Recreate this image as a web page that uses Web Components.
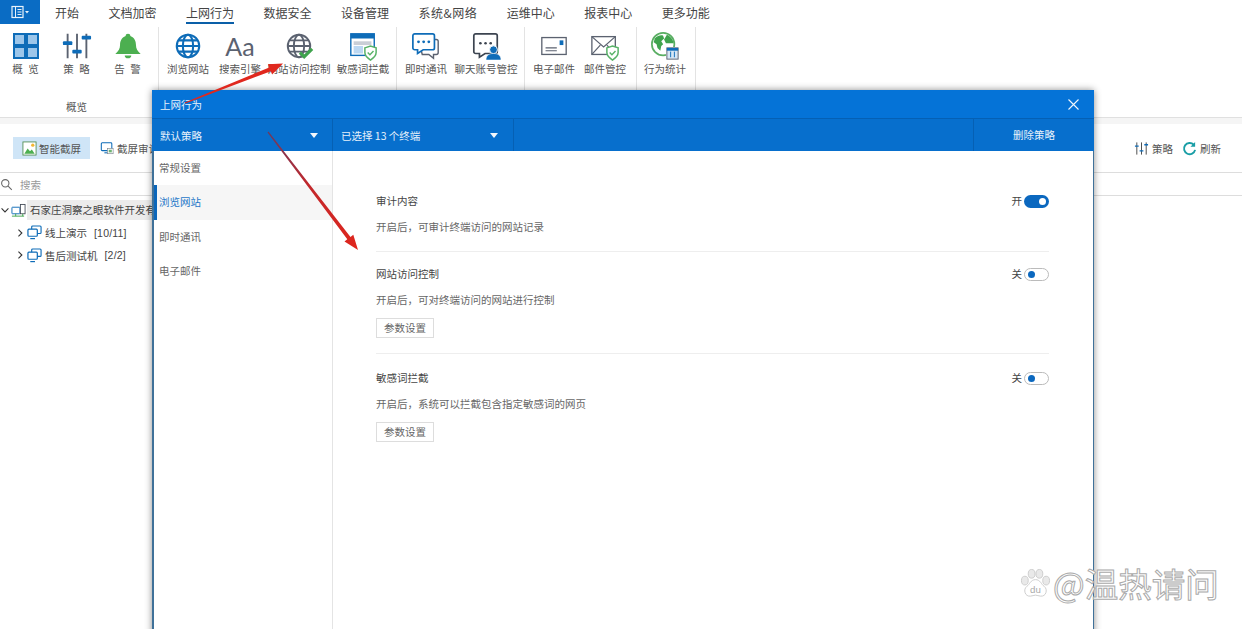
<!DOCTYPE html>
<html lang="zh"><head><meta charset="utf-8"><title>上网行为</title>
<style>
html,body{margin:0;height:629px;overflow:hidden;background:#fff;font-family:"Noto Sans CJK SC","Liberation Sans",sans-serif;color:#444}
</style></head><body>
<app-shell>
  <ribbon-tabs>
    <tab-item>开始</tab-item><tab-item>文档加密</tab-item><tab-item active>上网行为</tab-item><tab-item>数据安全</tab-item><tab-item>设备管理</tab-item><tab-item style="letter-spacing:.5px">系统&amp;网络</tab-item><tab-item>运维中心</tab-item><tab-item>报表中心</tab-item><tab-item>更多功能</tab-item>
  </ribbon-tabs>
  <ribbon-bar>
    <ribbon-group caption="概览" style="--pl:0px;--pr:5px">
      <ribbon-btn w="51" icon="grid">概 览</ribbon-btn><ribbon-btn w="51" icon="sliders">策 略</ribbon-btn><ribbon-btn w="51" icon="bell">告 警</ribbon-btn>
    </ribbon-group>
    <ribbon-group style="--pl:5px;--pr:0px">
      <ribbon-btn w="48" icon="globe">浏览网站</ribbon-btn><ribbon-btn w="56" icon="aa">搜索引擎</ribbon-btn><ribbon-btn w="62" icon="globecheck">网站访问控制</ribbon-btn><ribbon-btn w="66" icon="winshield">敏感词拦截</ribbon-btn>
    </ribbon-group>
    <ribbon-group style="--pl:3px;--pr:4px">
      <ribbon-btn w="52" icon="chat">即时通讯</ribbon-btn><ribbon-btn w="68" icon="chatuser">聊天账号管控</ribbon-btn>
    </ribbon-group>
    <ribbon-group style="--pl:3px;--pr:6px">
      <ribbon-btn w="52" icon="mail">电子邮件</ribbon-btn><ribbon-btn w="50" icon="mailshield">邮件管控</ribbon-btn>
    </ribbon-group>
    <ribbon-group style="--pl:0px;--pr:2px">
      <ribbon-btn w="56" icon="stats">行为统计</ribbon-btn>
    </ribbon-group>
  </ribbon-bar>
  <audit-toolbar></audit-toolbar>
  <search-row></search-row>
  <device-tree>
    <tree-row level="0" open>石家庄洞察之眼软件开发有</tree-row>
    <tree-row level="1" count="[10/11]">线上演示</tree-row>
    <tree-row level="1" count="[2/2]">售后测试机</tree-row>
  </device-tree>
  <policy-dialog>
    <policy-section heading="审计内容" desc="开启后，可审计终端访问的网站记录" on style="--pt:42px"></policy-section>
    <policy-section heading="网站访问控制" desc="开启后，可对终端访问的网站进行控制" action style="--pt:14px"></policy-section>
    <policy-section heading="敏感词拦截" desc="开启后，系统可以拦截包含指定敏感词的网页" action last style="--pt:16px"></policy-section>
  </policy-dialog>
  <red-arrows></red-arrows>
  <water-mark></water-mark>
</app-shell>
<script>
const B='#0e6cb8',G='#5b6270',GR='#4caf50',LB='#9cc6ea';
const shield=(x,y,s)=>`<g transform="translate(${x} ${y}) scale(${s})"><path d="M0 2 6 0l6 2v5c0 4-3 6-6 8-3-2-6-4-6-8z" fill="#fff" stroke="#58b368" stroke-width="1.6"/><path d="M3 7l2.4 2.4L9.2 5.4" fill="none" stroke="#58b368" stroke-width="1.5"/></g>`;
const globe=(c,w)=>`<circle cx="14" cy="14" r="12" fill="none" stroke="${c}" stroke-width="${w}"/><ellipse cx="14" cy="14" rx="5.5" ry="12" fill="none" stroke="${c}" stroke-width="${w}"/><path d="M2 14h24M3.8 8h20.4M3.8 20h20.4" fill="none" stroke="${c}" stroke-width="${w}"/>`;
const ICONS={
 grid:`<g fill="${LB}" stroke="${B}" stroke-width="2"><rect x="4" y="4" width="11" height="11"/><rect x="17" y="4" width="11" height="11"/><rect x="4" y="17" width="11" height="11"/><rect x="17" y="17" width="11" height="11"/></g>`,
 sliders:`<g stroke="${G}" stroke-width="2"><path d="M6 3v26M16 3v26M26 3v26"/></g><g fill="${B}"><rect x="1" y="11" width="10" height="4" rx="1"/><rect x="11" y="20" width="10" height="4" rx="1"/><rect x="21" y="5" width="10" height="4" rx="1"/></g>`,
 bell:`<path d="M16 3c1.600 0 2.500 1 2.500 2.300C23 6.800 24.500 11 24.500 15c0 4 1.500 6.500 5 9.500H2.500c3.500-3 5-5.500 5-9.500 0-4 1.500-8.200 6-9.700C13.500 4 14.400 3 16 3z" fill="${GR}"/><path d="M12.500 26a3.500 3 0 0 0 7 0z" fill="${GR}"/>`,
 globe:`<g transform="translate(2 2)">${globe(B,2.200)}</g>`,
 globecheck:`<g transform="translate(2 2)">${globe(G,2)}</g><path d="M17 23l4.500 4.500L30 19" fill="none" stroke="#3fa34d" stroke-width="3.400"/>`,
 winshield:`<rect x="3" y="3" width="25" height="23" fill="#fff" stroke="${B}" stroke-width="1.500"/><rect x="3" y="3" width="25" height="5" fill="${B}"/><rect x="6" y="11" width="19" height="4" fill="#c9ced6"/><rect x="6" y="16" width="10" height="8" fill="#bcd8f2"/><path d="M18 18h7M18 21h4" stroke="#c9ced6" stroke-width="1.500"/>${shield(18,16,1)}`,
 chat:`<path d="M8 9h19a2 2 0 0 1 2 2v12a2 2 0 0 1-2 2h-3v4l-5-4h-7z" fill="#fff" stroke="${G}" stroke-width="1.500"/><path d="M4 3h19a2 2 0 0 1 2 2v13a2 2 0 0 1-2 2H13l-6 4v-4H4a2 2 0 0 1-2-2V5a2 2 0 0 1 2-2z" fill="#fff" stroke="${B}" stroke-width="1.800"/><g fill="${B}"><circle cx="8" cy="11.500" r="1.500"/><circle cx="13.500" cy="11.500" r="1.500"/><circle cx="19" cy="11.500" r="1.500"/></g>`,
 chatuser:`<path d="M5 3h21a2 2 0 0 1 2 2v17a2 2 0 0 1-2 2H15l-6 4v-4H5a2 2 0 0 1-2-2V5a2 2 0 0 1 2-2z" fill="#fff" stroke="#3c4450" stroke-width="1.800"/><g fill="#3c4450"><circle cx="10" cy="13" r="1.400"/><circle cx="15.500" cy="13" r="1.400"/><circle cx="21" cy="13" r="1.400"/></g><circle cx="24" cy="20" r="4.200" fill="${B}" stroke="#fff"/><path d="M16 31c0-5 3-7 8-7s8 2 8 7z" fill="${B}" stroke="#fff" stroke-width=".6"/>`,
 mail:`<rect x="3" y="7" width="26" height="18" fill="#fff" stroke="${G}" stroke-width="1.400"/><rect x="22" y="10" width="4" height="5" fill="${B}"/><path d="M7 18h12M7 21h12" stroke="${G}" stroke-width="1.100"/>`,
 mailshield:`<rect x="2" y="6" width="25" height="19" fill="#fff" stroke="${G}" stroke-width="1.400"/><path d="M2 6l12.500 11L27 6M2 25l9-10M27 25l-9-10" fill="none" stroke="${G}" stroke-width="1.300"/>${shield(18,16,1)}`,
 stats:`<circle cx="14" cy="14" r="12" fill="#fff" stroke="#5aae63" stroke-width="1.800"/><path d="M5 8c3-3 7-4 9-3l1 3-3 3 2 3-2 2-1 5-3-3-1-4-3-2z" fill="#3fa34d"/><path d="M18 4c3 1 7 5 7 9h-8l-2-4z" fill="#3fa34d"/><rect x="17" y="17" width="14" height="14" fill="#fff"/><rect x="18" y="18" width="12" height="12" fill="#d6e6f5" stroke="${G}"/><rect x="18" y="18" width="12" height="3" fill="${B}"/><path d="M22 22v6M26 22v6" stroke="${B}"/>`,
 photo:`<rect x="2" y="2" width="28" height="28" fill="#fff" stroke="#4a8a4c" stroke-width="1.800"/><path d="M5 27l7-11 5 6 4-4 6 9z" fill="#4caf50"/><circle cx="23" cy="9" r="3.500" fill="#f2b632"/>`,
 screen:`<rect x="3" y="4" width="24" height="18" rx="2" fill="#fff" stroke="${B}" stroke-width="2.400"/><path d="M10 27h8" stroke="${B}" stroke-width="2.400"/><rect x="17" y="17" width="13" height="12" fill="#fff" stroke="#7d8791" stroke-width="1.500"/><rect x="20" y="20" width="7" height="6" fill="#6fb574"/>`,
 sliderthin:`<path d="M6 3v26M16 3v26M26 3v26" stroke="#444" stroke-width="2"/><path d="M2 11h8M12 21h8M22 8h8" stroke="${B}" stroke-width="3"/>`,
 refresh:`<path d="M25 8A12 12 0 1 0 28 19" fill="none" stroke="#1a9ea6" stroke-width="4"/><path d="M28 2v10H18z" fill="#1a9ea6"/>`,
 search:`<circle cx="13" cy="13" r="9" fill="none" stroke="#666" stroke-width="2.600"/><path d="M20 20l9 9" stroke="#666" stroke-width="2.600"/>`,
 net:`<rect x="2" y="9" width="17" height="14" rx="1" fill="#fff" stroke="${B}" stroke-width="2"/><rect x="20" y="3" width="10" height="20" fill="#fff" stroke="#3c4450" stroke-width="1.800"/><path d="M2 28h26M10 23v5M25 23v5" stroke="#3fa34d" stroke-width="2"/>`,
 monitor:`<rect x="10" y="2" width="20" height="16" rx="2" fill="#fff" stroke="${B}" stroke-width="2.400"/><rect x="2" y="9" width="20" height="15" rx="2" fill="#fff" stroke="${B}" stroke-width="2.600"/><path d="M7 29h10" stroke="${B}" stroke-width="2.600"/>`,
 chevdown:`<path d="M5 11l11 11 11-11" fill="none" stroke="#333" stroke-width="3.500"/>`,
 chevright:`<path d="M11 5l11 11-11 11" fill="none" stroke="#333" stroke-width="3.500"/>`
};
class Base extends HTMLElement{
  connectedCallback(){ if(this.shadowRoot) return; this.attachShadow({mode:'open'}).innerHTML=this.render(); }
  render(){return ''}
}
const def=(n,f)=>customElements.define(n,class extends Base{render(){return f(this)}});
def('x-icon',e=>{const s=e.getAttribute('size')||26,n=e.getAttribute('name');
  return `<style>:host{display:inline-flex;flex:none;width:${s}px;height:${s}px}svg{display:block;width:100%;height:100%}</style><svg viewBox="0 0 32 32">${ICONS[n]||''}</svg>`});
def('app-shell',()=>`<style>:host{display:flex;flex-direction:column;position:relative;width:1242px;height:629px;overflow:hidden}</style><slot></slot>`);
def('ribbon-tabs',()=>`<style>:host{display:flex;align-items:stretch;height:25px;gap:29.500px}
 .logo{width:40px;height:24px;background:#0a6cc4;display:flex;align-items:center;justify-content:center;margin-right:-14.500px}
 svg{width:20px;height:14px}</style>
 <div class="logo"><svg viewBox="0 0 20 14"><rect x="2" y="1.500" width="11" height="11" fill="none" stroke="#e8f2fb" stroke-width="1.200"/><path d="M5.500 1.500v11M7.500 4.500h4M7.500 7h4M7.500 9.500h4" stroke="#e8f2fb"/><path d="M15 6h4l-2 2.500z" fill="#e8f2fb"/></svg></div><slot></slot>`);
def('tab-item',e=>`<style>:host{display:block;font-size:12px;line-height:25px;height:24px;color:#444;white-space:nowrap;position:relative}
 .u{position:absolute;left:0;right:0;top:22px;height:2px;background:${e.hasAttribute('active')?'#0a5fa8':'transparent'}}</style><slot></slot><div class="u"></div>`);
def('ribbon-bar',()=>`<style>:host{display:flex;height:92px;background:#fff;border-bottom:1px solid #e0e0e0;box-sizing:content-box;align-items:stretch;padding-top:0}</style><slot></slot>`);
def('ribbon-group',e=>{const c=e.getAttribute('caption');return `<style>:host{display:flex;flex-direction:column;padding:0 var(--pr) 0 var(--pl);border-right:1px solid #e3e3e3;margin-top:2px}
 .r{display:flex;flex:1}.c{height:20px;font-size:10.5px;line-height:20px;text-align:center;color:#555}</style><div class="r"><slot></slot></div><div class="c">${c||''}</div>`});
def('ribbon-btn',e=>{const w=e.getAttribute('w'),n=e.getAttribute('icon');
 const ic=n==='aa'?`<span class="aa">Aa</span>`:`<x-icon name="${n}" size="${n==='grid'?32:30}"></x-icon>`;
 return `<style>:host{display:flex;flex-direction:column;align-items:center;width:${w}px;flex:none}
 .i{height:35px;padding-top:2px;box-sizing:border-box;display:flex;align-items:center;justify-content:center}
 .aa{font:400 25px/28px Lato,"Liberation Sans",sans-serif;color:${G}}
 .l{font-size:10.5px;line-height:16px;color:#555;white-space:nowrap;margin-top:-1px;word-spacing:3px}</style><div class="i">${ic}</div><div class="l"><slot></slot></div>`});
def('audit-toolbar',()=>`<style>:host{display:flex;align-items:center;height:48px;padding:0 21px 0 13px;border-top:6px solid #f5f5f5;border-bottom:1px solid #ddd;font-size:10.5px;color:#555;box-sizing:content-box}
 .it{display:flex;align-items:center;gap:2px;height:22px}
 .sel{background:#cfe5f7;width:77px;box-sizing:border-box;padding-left:9px;margin-right:10px}
 .sp{flex:1}.rt{gap:3px}</style>
 <div class="it sel"><x-icon name="photo" size="15"></x-icon><span>智能截屏</span></div>
 <div class="it" style="gap:3px"><x-icon name="screen" size="14"></x-icon><span>截屏审计</span></div>
 <div class="sp"></div>
 <div class="it rt" style="margin-right:9px"><x-icon name="sliderthin" size="15"></x-icon><span>策略</span></div>
 <div class="it rt"><x-icon name="refresh" size="15"></x-icon><span>刷新</span></div>`);
def('search-row',()=>`<style>:host{display:flex;align-items:center;gap:7px;height:22px;padding-left:0;border-bottom:1px solid #ddd;font-size:10.5px;color:#999}</style><x-icon name="search" size="13"></x-icon><span>搜索</span>`);
def('device-tree',()=>`<style>:host{display:flex;flex-direction:column;padding-top:3px}</style><slot></slot>`);
def('tree-row',e=>{const l=+e.getAttribute('level'),c=e.getAttribute('count');
 return `<style>:host{display:flex;align-items:center;height:22.500px;font-size:10.5px;color:#444;white-space:nowrap;padding-left:${l?15:0}px}
 .t{padding-left:3px;${l?'':'background:#ececec;width:125px;box-sizing:border-box;overflow:hidden;height:20px;line-height:20px;margin-left:1px;'}}
 .c{margin-left:7px;font:10.5px "Liberation Sans",sans-serif;letter-spacing:.2px}</style>
 <x-icon name="${l?'chevright':'chevdown'}" size="10"></x-icon><x-icon name="${l?'monitor':'net'}" size="15" style="margin-left:${l?2:1}px"></x-icon><span class="t"><slot></slot></span>${c?`<span class="c">${c}</span>`:''}`});
def('policy-dialog',()=>`<style>:host{position:absolute;left:152px;top:90px;width:942px;height:560px;box-sizing:border-box;background:#fff;border:solid #3f7199;border-width:0 2px 0 2px;border-right-width:1px;box-shadow:0 0 7px rgba(0,0,0,.45);display:flex;flex-direction:column;color:#555}
 .title{height:28px;margin:0 -1px 0 -2px;background:#0573d7;display:flex;align-items:center;justify-content:space-between;padding:0 15px 0 8px;color:#e6f1fb;font-size:10.5px}
 .close{width:11px;height:11px;display:block}
 .bar{height:33px;margin:0 -1px 0 -2px;box-sizing:border-box;background:#076fcd;border-top:1px solid #0560b4;display:flex;color:#e6f1fb;font-size:10.5px}
 .cell{display:flex;align-items:center;border-right:1px solid #0560b4;box-sizing:border-box;padding:0 14px 0 8px;justify-content:space-between}
 .caret{width:0;height:0;border:4.500px solid transparent;border-top:5px solid #f2f7fc;border-bottom:0}
 .body{flex:1;display:flex;min-height:0}
 nav{width:179px;box-sizing:border-box;border-right:1px solid #e4e4e4;font-size:10.5px;flex:none}
 nav div{height:34.400px;line-height:34.400px;padding-left:2px;color:#666;border-left:3px solid transparent}
 nav .on{background:#f6f6f6;color:#1f78c8;border-left-color:#0b66ba}
 main{flex:1;padding:0 44px 0 43px}</style>
 <div class="title"><span>上网行为</span><svg class="close" viewBox="0 0 11 11"><path d="M.5.500l10 10M10.500.500l-10 10" stroke="#f2f7fc" stroke-width="1.100"/></svg></div>
 <div class="bar"><div class="cell" style="width:181px"><span>默认策略</span><i class="caret"></i></div><div class="cell" style="width:181px;padding-right:15px"><span>已选择 13 个终端</span><i class="caret"></i></div><div style="flex:1;border-right:1px solid #0560b4"></div><div style="width:120px;text-align:center;line-height:32px">删除策略</div></div>
 <div class="body"><nav><div>常规设置</div><div class="on">浏览网站</div><div>即时通讯</div><div>电子邮件</div></nav><main><slot></slot></main></div>`);
def('policy-section',e=>{const g=n=>e.getAttribute(n),on=e.hasAttribute('on'),act=e.hasAttribute('action'),last=e.hasAttribute('last');
 return `<style>:host{display:block;padding:var(--pt) 0 ${act?15:16}px;${last?'':'border-bottom:1px solid #eee;'}font-size:10.5px;color:#555}
 .h{display:flex;justify-content:space-between;align-items:center;height:16px;color:#444;line-height:16px}
 .d{margin-top:10px;line-height:16px;color:#666}
 .b{display:block;margin-top:10px;width:58px;height:20px;box-sizing:border-box;border:1px solid #ddd;text-align:center;line-height:18px;color:#666}</style>
 <div class="h"><span>${g('heading')}</span><policy-toggle ${on?'on':''}></policy-toggle></div><div class="d">${g('desc')}</div>${act?'<span class="b">参数设置</span>':''}`});
def('policy-toggle',e=>{const on=e.hasAttribute('on');return `<style>:host{display:flex;align-items:center;gap:2px;color:#444}
 .t{width:25px;height:13px;box-sizing:border-box;border-radius:7px;display:flex;align-items:center;padding:0 3px;
 ${on?'background:#0b68bf;justify-content:flex-end;':'background:#fff;border:1px solid #bbb;'}}
 .k{width:7px;height:7px;border-radius:50%;background:${on?'#fff':'#0b68bf'}}</style><span>${on?'开':'关'}</span><div class="t"><div class="k"></div></div>`});
def('red-arrows',()=>`<style>:host{position:absolute;inset:0;pointer-events:none}svg{width:1242px;height:629px;display:block}</style>
 <svg viewBox="0 0 1242 629"><defs><linearGradient id="g2" gradientUnits="userSpaceOnUse" x1="268" y1="132" x2="358" y2="250"><stop offset="0" stop-color="#6a3a60"/><stop offset=".45" stop-color="#c2282c"/><stop offset="1" stop-color="#e0261c"/></linearGradient></defs>
 <polygon points="184.800,102.500 269.200,67.500 267.900,64.200 283,63.500 272.100,74.400 270.800,71.200 185.200,103.500" fill="#e0281e"/><polygon points="268.500,131.600 350.500,236.900 353.300,234.800 358,250 344.500,241.400 347.300,239.300 267.500,132.400" fill="url(#g2)"/></svg>`);
def('water-mark',()=>`<style>:host{position:absolute;left:1020px;top:563px;display:flex;align-items:center;gap:2px}
 svg{width:31px;height:31px}span{font-size:33.500px;line-height:40px;color:#fff;-webkit-text-stroke:1px #aaa;white-space:nowrap}</style>
 <svg viewBox="0 0 32 32"><g fill="#e9e9e9" stroke="#ccc"><ellipse cx="5" cy="13" rx="3.500" ry="4.500"/><ellipse cx="12" cy="6" rx="3.500" ry="4.500"/><ellipse cx="20" cy="6" rx="3.500" ry="4.500"/><ellipse cx="27" cy="13" rx="3.500" ry="4.500"/><path d="M16 12c5 0 6 5 9 7 4 3 2 11-4 10-2 0-3-1-5-1s-3 1-5 1c-6 1-8-7-4-10 3-2 4-7 9-7z" fill="#fff"/></g><text x="16" y="26" text-anchor="middle" font-size="10" fill="#aaa" font-family="Liberation Sans">du</text></svg>
 <span>@温热请问</span>`);
</script>
</body></html>
